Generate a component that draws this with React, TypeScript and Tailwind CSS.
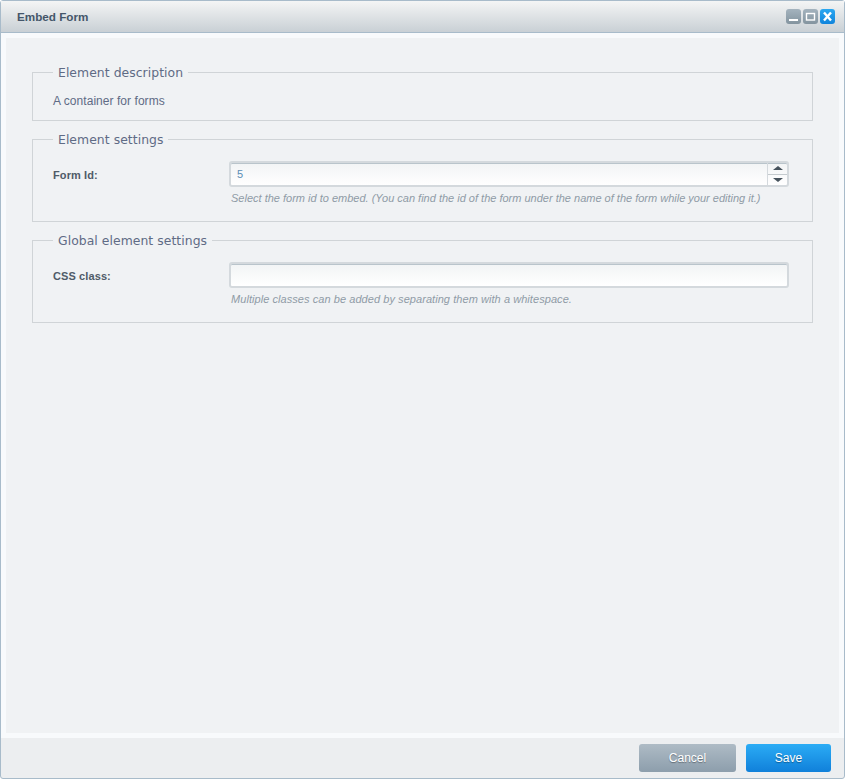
const bodyFont = "font-['Liberation_Sans',Arial,sans-serif]";

function WindowButton({ kind }: { kind: 'min' | 'max' | 'close' }) {
  const tone =
    kind === 'close'
      ? 'bg-gradient-to-b from-[#2aa7f0] to-[#0f84dc]'
      : 'bg-gradient-to-b from-[#a4b3be] to-[#83949f]';
  return (
    <div className={`flex h-[15px] w-[15px] items-center justify-center rounded-[3px] ${tone}`}>
      <svg width="15" height="15" viewBox="0 0 15 15">
        {kind === 'min' && <rect x="3" y="10" width="9" height="2" fill="#fff" />}
        {kind === 'max' && <rect x="3.5" y="4.5" width="8" height="6.5" fill="none" stroke="#fff" strokeWidth="1.4" />}
        {kind === 'close' && (
          <path d="M4 3.5 L11 11.5 M11 3.5 L4 11.5" stroke="#fff" strokeWidth="2.4" fill="none" />
        )}
      </svg>
    </div>
  );
}

function Section({ title, className, children }: { title: string; className: string; children: React.ReactNode }) {
  return (
    <fieldset className={`mx-[26px] border border-[#d0d4d7] pl-[20px] pr-[23px] ${className}`}>
      <legend className="relative top-[1px] px-[5px] font-['DejaVu_Sans',Verdana,sans-serif] text-[12.4px] leading-[16px] tracking-[0.05px] text-[#5f6b85]">
        {title}
      </legend>
      {children}
    </fieldset>
  );
}

function Field({ label, hint, hintClass, children }: { label: string; hint: string; hintClass?: string; children: React.ReactNode }) {
  return (
    <div className="flex">
      <div className="w-[176px] pt-[6px] text-[11px] font-bold leading-[16px] tracking-[0.1px] text-[#4f5b68]">{label}</div>
      <div className="flex-1">
        {children}
        <p className={`mt-[4px] pl-[2px] text-[11px] italic leading-[14px] text-[#8f9ba6] ${hintClass ?? ''}`}>{hint}</p>
      </div>
    </div>
  );
}

export default function App() {
  return (
    <div className={`flex h-[779px] w-[845px] flex-col rounded-[3px] border border-[#a8bbca] bg-[#eceef0] ${bodyFont}`}>
      <div className="flex h-[32px] items-center justify-between border-b border-[#a8bbca] bg-gradient-to-b from-[#f4f5f5] to-[#c9d0d5] pl-[16px] pr-[9px]">
        <span className="text-[11.7px] font-bold text-[#44566a]">Embed Form</span>
        <div className="flex gap-[2px]">
          <WindowButton kind="min" />
          <WindowButton kind="max" />
          <WindowButton kind="close" />
        </div>
      </div>

      <div className="flex-1 border-[5px] border-[#f8fafc] bg-[#f0f2f4] pt-[26px]">
        <Section title="Element description" className="h-[57px]">
          <p className="pt-[13px] text-[12px] leading-[16px] tracking-[0.05px] text-[#5f6b85]">A container for forms</p>
        </Section>

        <Section title="Element settings" className="mt-[10px] h-[91px]">
          <div className="pt-[14px]">
            <Field
              label="Form Id:"
              hint="Select the form id to embed. (You can find the id of the form under the name of the form while your editing it.)"
            >
              <div className="flex h-[26px] rounded-[3px] border-[2px] border-[#d4d9dd] bg-gradient-to-b from-[#f2f4f5] to-white shadow-[inset_0_1px_0_#b9c4cb]">
                <div className="flex-1 pl-[6px] text-[11px] leading-[22px] text-[#5b8db5]">5</div>
                <div className="flex w-[20px] flex-col border-l border-[#d4d9dd]">
                  <div className="flex flex-1 items-center justify-center border-b border-[#c4cace]">
                    <div className="h-0 w-0 border-x-[5px] border-b-[4px] border-x-transparent border-b-[#46525c]" />
                  </div>
                  <div className="flex flex-1 items-center justify-center">
                    <div className="h-0 w-0 border-x-[5px] border-t-[4px] border-x-transparent border-t-[#46525c]" />
                  </div>
                </div>
              </div>
            </Field>
          </div>
        </Section>

        <Section title="Global element settings" className="mt-[10px] h-[91px]">
          <div className="pt-[14px]">
            <Field
              label="CSS class:"
              hint="Multiple classes can be added by separating them with a whitespace."
              hintClass="tracking-[0.06px]"
            >
              <div className="h-[26px] rounded-[3px] border-[2px] border-[#d4d9dd] bg-gradient-to-b from-[#f2f4f5] to-white shadow-[inset_0_1px_0_#b9c4cb]" />
            </Field>
          </div>
        </Section>
      </div>

      <div className="flex h-[40px] items-center justify-end gap-[10px] pr-[13px]">
        <button className="h-[28px] w-[97px] rounded-[3px] bg-gradient-to-b from-[#aebbc5] to-[#8d9eac] text-[12px] text-white [text-shadow:0_1px_1px_rgba(0,0,0,0.35)]">
          Cancel
        </button>
        <button className="h-[28px] w-[85px] rounded-[3px] bg-gradient-to-b from-[#2bacf5] to-[#1080da] text-[12px] text-white [text-shadow:0_1px_1px_rgba(0,0,0,0.35)]">
          Save
        </button>
      </div>
    </div>
  );
}
